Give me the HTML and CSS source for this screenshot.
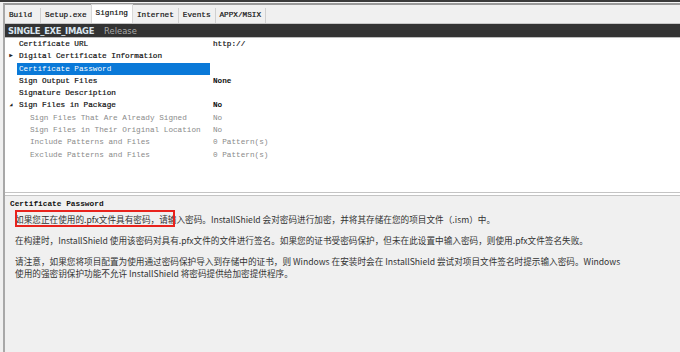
FILE: index.html
```html
<!DOCTYPE html>
<html>
<head>
<meta charset="utf-8">
<link rel="stylesheet" href="styles.css">
</head>
<body>
<div class="topline"></div>
<div class="window">
  <div class="tabs">
    <div class="tab first">Build</div>
    <div class="tab">Setup.exe</div>
    <div class="tab active">Signing</div>
    <div class="tab">Internet</div>
    <div class="tab">Events</div>
    <div class="tab">APPX/MSIX</div>
  </div>
  <div class="header">
    <span class="hname">SINGLE_EXE_IMAGE</span>
    <span class="hrel">Release</span>
  </div>
  <div class="grid">
    <div class="row"><span class="exp"></span><span class="name">Certificate URL</span><span class="val">http://</span></div>
    <div class="row"><span class="exp">&#9654;</span><span class="name">Digital Certificate Information</span><span class="val"></span></div>
    <div class="row sel"><span class="exp"></span><span class="name">Certificate Password</span><span class="val"></span></div>
    <div class="row"><span class="exp"></span><span class="name">Sign Output Files</span><span class="val b">None</span></div>
    <div class="row"><span class="exp"></span><span class="name">Signature Description</span><span class="val"></span></div>
    <div class="row"><span class="exp small">&#9698;</span><span class="name">Sign Files in Package</span><span class="val b">No</span></div>
    <div class="row sub"><span class="exp"></span><span class="name">Sign Files That Are Already Signed</span><span class="val">No</span></div>
    <div class="row sub"><span class="exp"></span><span class="name">Sign Files in Their Original Location</span><span class="val">No</span></div>
    <div class="row sub"><span class="exp"></span><span class="name">Include Patterns and Files</span><span class="val">0 Pattern(s)</span></div>
    <div class="row sub"><span class="exp"></span><span class="name">Exclude Patterns and Files</span><span class="val">0 Pattern(s)</span></div>
  </div>
  <div class="divider"></div>
  <div class="desc">
    <div class="dtitle">Certificate Password</div>
    <p class="para">如果您正在使用的.pfx文件具有密码，请输入密码。InstallShield 会对密码进行加密，并将其存储在您的项目文件（.ism）中。</p>
    <p class="para">在构建时，InstallShield 使用该密码对具有.pfx文件的文件进行签名。如果您的证书受密码保护，但未在此设置中输入密码，则使用.pfx文件签名失败。</p>
    <p class="para">请注意，如果您将项目配置为使用通过密码保护导入到存储中的证书，则 Windows 在安装时会在 InstallShield 尝试对项目文件签名时提示输入密码。Windows<br>使用的强密钥保护功能不允许 InstallShield 将密码提供给加密提供程序。</p>
    <div class="redbox"></div>
  </div>
</div>
</body>
</html>
```

FILE: styles.css
```css
html, body {
  margin: 0;
  padding: 0;
  width: 680px;
  height: 352px;
  overflow: hidden;
  background: #f0f0f0;
}
.topline {
  height: 2px;
  background: #3a3a3a;
  border-bottom: 1px solid #f4f4f4;
}
.window {
  margin-left: 3px;
  border-left: 2px solid #a8a8a8;
  border-top: 2px solid #9a9a9a;
  height: 347px;
  display: flex;
  flex-direction: column;
}
.tabs {
  display: flex;
  align-items: flex-end;
  height: 18px;
  padding-left: 0;
  background: #f0f0f0;
  border-bottom: 1px solid #c8c8c8;
  font-family: "Liberation Mono", monospace;
  font-size: 7.7px;
  color: #111;
}
.tab {
  height: 15px;
  line-height: 15px;
  padding: 0 4px;
  border-right: 1px solid #d0d0d0;
  -webkit-text-stroke: 0.2px #111;
}
.tab.first {
  padding-right: 8px;
}
.tab.active {
  height: 18px;
  line-height: 16px;
  background: #fff;
  border-left: 1px solid #d8d8d8;
  border-right: 1px solid #d8d8d8;
  border-top: 1px solid #d8d8d8;
  margin-left: -1px;
}
.header {
  height: 13px;
  background: #333;
  display: flex;
  align-items: center;
  gap: 10px;
  padding-left: 3px;
  font-family: "DejaVu Sans", sans-serif;
  font-size: 8.4px;
  border-bottom: 1px solid #bdbdbd;
}
.hname {
  color: #d8e4ee;
  font-weight: bold;
  letter-spacing: -0.3px;
}
.hrel {
  color: #aaa;
}
.grid {
  background: #fff;
  height: 154px;
  font-family: "Liberation Mono", monospace;
  font-size: 7.7px;
  color: #111;
}
.row {
  display: flex;
  height: 12.3px;
  line-height: 12.3px;
  align-items: center;
}
.exp {
  width: 12px;
  flex: none;
  font-size: 6px;
  text-align: center;
  color: #222;
}
.exp.small {
  font-size: 5px;
}
.name {
  width: 193px;
  flex: none;
  padding-left: 2px;
  box-sizing: border-box;
  white-space: nowrap;
  -webkit-text-stroke: 0.2px #111;
}
.row.sub .name {
  padding-left: 13px;
  color: #8a8a8a;
  -webkit-text-stroke: 0;
}
.row.sel .name {
  background: #0a79d8;
  color: #fff;
  -webkit-text-stroke: 0;
}
.val {
  padding-left: 3px;
  white-space: nowrap;
  -webkit-text-stroke: 0.2px #111;
}
.val.b {
  font-weight: bold;
  -webkit-text-stroke: 0;
}
.row.sub .val {
  color: #8a8a8a;
  -webkit-text-stroke: 0;
}
.divider {
  height: 2px;
  background: #fff;
  border-top: 1px solid #c4c4c4;
  border-bottom: 1px solid #c4c4c4;
}
.desc {
  flex: 1;
  position: relative;
  background: #f0f0f0;
  padding: 0 0 0 5px;
  color: #333;
}
.dtitle {
  font-family: "Liberation Mono", monospace;
  font-weight: bold;
  font-size: 7.8px;
  color: #111;
  line-height: 8px;
  margin: 4px 0 5px;
}
.para {
  margin: 0 0 9px 5px;
  font-family: "Noto Sans CJK SC", sans-serif;
  font-size: 8.65px;
  line-height: 12px;
  white-space: nowrap;
}
.redbox {
  position: absolute;
  left: 10px;
  top: 14px;
  width: 156px;
  height: 13px;
  border: 2px solid #e8231d;
}
```
